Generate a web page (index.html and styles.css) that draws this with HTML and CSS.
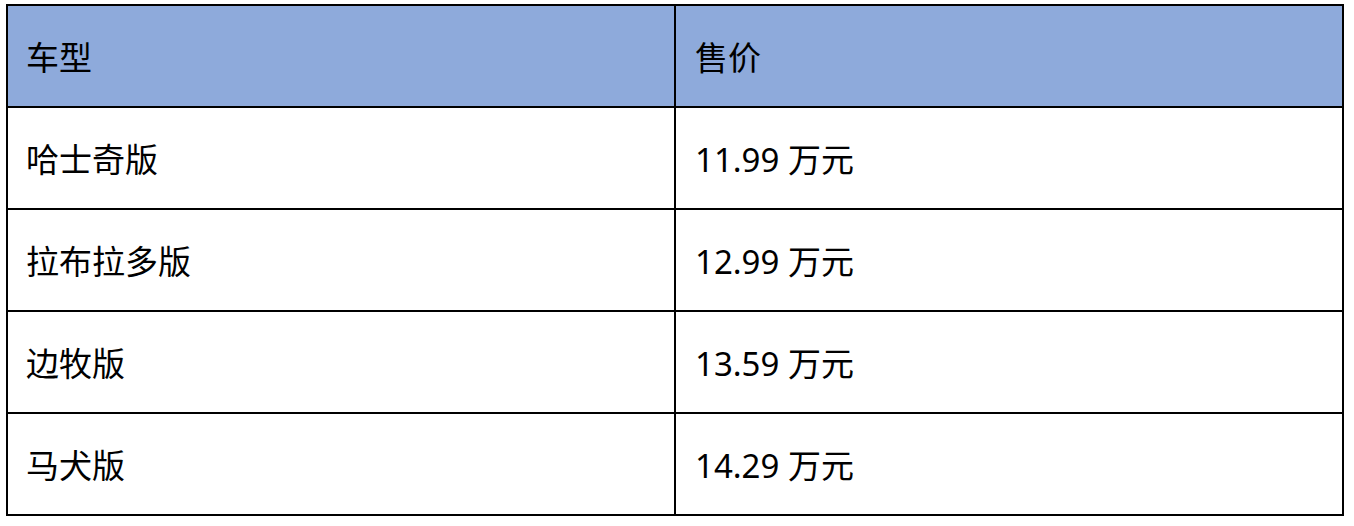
FILE: index.html
```html
<!DOCTYPE html>
<html lang="zh">
<head>
<meta charset="utf-8">
<title>车型售价</title>
<link rel="stylesheet" href="styles.css">
</head>
<body>
<table class="price-table">
  <thead>
    <tr><th>车型</th><th>售价</th></tr>
  </thead>
  <tbody>
    <tr><td>哈士奇版</td><td>11.99 万元</td></tr>
    <tr><td>拉布拉多版</td><td>12.99 万元</td></tr>
    <tr><td>边牧版</td><td>13.59 万元</td></tr>
    <tr><td>马犬版</td><td>14.29 万元</td></tr>
  </tbody>
</table>
</body>
</html>
```

FILE: styles.css
```css
html, body {
  margin: 0;
  padding: 0;
  background: #ffffff;
}
body {
  padding: 4px 0 0 6px;
  font-family: "Noto Sans", "Noto Sans CJK SC", sans-serif;
  color: #000000;
}
.price-table {
  border-collapse: collapse;
  width: 1338px;
  table-layout: fixed;
}
.price-table th,
.price-table td {
  border: 2px solid #000000;
  height: 97px;
  box-sizing: content-box;
  padding: 3px 0 0 18px;
  font-size: 33px;
  font-weight: normal;
  text-align: left;
  vertical-align: middle;
  line-height: 1.2;
}
.price-table td + td,
.price-table th + th {
  padding-left: 19px;
}
.price-table thead th {
  background: #8eaadb;
}
```
